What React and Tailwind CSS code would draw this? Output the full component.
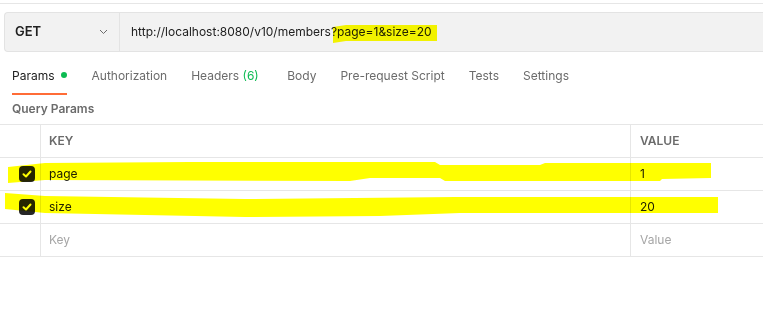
import React from 'react';

const tabs = [
  { label: 'Authorization' },
  { label: 'Headers', count: '(6)' },
  { label: 'Body' },
  { label: 'Pre-request Script' },
  { label: 'Tests' },
  { label: 'Settings' },
];

const rows = [
  { key: 'page', value: '1', checked: true },
  { key: 'size', value: '20', checked: true },
];

const Checkbox = () => (
  <div className="w-[16px] h-[16px] rounded-[4px] bg-[#262626] flex items-center justify-center">
    <svg width="10" height="10" viewBox="0 0 10 10" fill="none">
      <path d="M1.5 5.2 L4 7.5 L8.5 2.5" stroke="#ffffff" strokeWidth="2" strokeLinecap="round" strokeLinejoin="round" />
    </svg>
  </div>
);

const App = () => {
  return (
    <div className="relative w-[763px] h-[323px] bg-white overflow-hidden font-['Inter',sans-serif] text-[#212121]">
      <div className="h-[4px] border-b border-[#e6e6e6]" />

      {/* request bar */}
      <div className="mt-[8px] ml-[4px] flex h-[40px] bg-[#f2f2f2] border border-r-0 border-[#e3e3e3] rounded-l-[4px]">
        <div className="w-[115px] flex items-center justify-between pl-[10px] pr-[11px] border-r border-[#e3e3e3]">
          <span className="text-[13px] font-semibold">GET</span>
          <svg width="9" height="6" viewBox="0 0 9 6" fill="none">
            <path d="M1 1 L4.5 4.5 L8 1" stroke="#6b6b6b" strokeWidth="1" />
          </svg>
        </div>
        <div className="flex items-center pl-[11px] text-[12px] text-[#212121]">
          http://localhost:8080/v10/members?page=1&amp;size=20
        </div>
      </div>

      {/* tabs */}
      <div className="flex px-[12px] mt-[15px] h-[27px] text-[12px]">
        <div className="relative flex items-start gap-[6px] mr-[25px]">
          <span className="text-[#212121]">Params</span>
          <span className="mt-[5px] w-[6px] h-[6px] rounded-full bg-[#0cbb52]" />
          <div className="absolute left-0 right-0 bottom-[-1px] h-[2px] bg-[#ff6c37]" />
        </div>
        {tabs.map((t) => (
          <div key={t.label} className={`${t.count ? 'w-[96px]' : 'mr-[24px]'} text-[#6b6b6b]`}>
            {t.label}
            {t.count && <span className="text-[#0cbb52]"> {t.count}</span>}
          </div>
        ))}
      </div>

      <div className="px-[12px] mt-[6px] text-[12px] font-semibold text-[#6b6b6b]">Query Params</div>

      {/* params table */}
      <div className="mt-[6px] grid grid-cols-[41px_590px_1fr] border-t border-[#e6e6e6] text-[12px]">
        <div className="h-[33px] border-b border-r border-[#e6e6e6]" />
        <div className="h-[33px] border-b border-r border-[#e6e6e6] flex items-center px-[8px] font-semibold text-[#6b6b6b]">KEY</div>
        <div className="h-[33px] border-b border-[#e6e6e6] flex items-center px-[9px] font-semibold text-[#6b6b6b]">VALUE</div>
        {rows.map((r) => (
          <React.Fragment key={r.key}>
            <div className="h-[33px] border-b border-r border-[#e6e6e6] flex items-center pl-[19px]">
              <Checkbox />
            </div>
            <div className="h-[33px] border-b border-r border-[#e6e6e6] flex items-center px-[8px]">{r.key}</div>
            <div className="h-[33px] border-b border-[#e6e6e6] flex items-center px-[9px]">{r.value}</div>
          </React.Fragment>
        ))}
        <div className="h-[33px] border-b border-r border-[#e6e6e6]" />
        <div className="h-[33px] border-b border-r border-[#e6e6e6] flex items-center px-[8px] text-[#a6a6a6]">Key</div>
        <div className="h-[33px] border-b border-[#e6e6e6] flex items-center px-[9px] text-[#a6a6a6]">Value</div>
      </div>

      {/* highlighter marks */}
      <svg className="absolute inset-0 pointer-events-none mix-blend-multiply" width="763" height="323" viewBox="0 0 763 323">
        <polygon fill="#ffff00" points="333,27 346,25 437,25 437,41 346,41 333,43" />
        <polygon fill="#ffff00" points="8,167 45,163 190,162 435,162 440,165 540,165 545,163 711,163 711,178 662,179 660,181 445,181 440,178 370,178 350,181 45,180 8,183" />
        <polygon fill="#ffff00" points="5,193 45,196 245,199 455,197 718,197 718,213 460,213 380,216 245,217 45,213 5,209" />
      </svg>
    </div>
  );
};

export default App;
